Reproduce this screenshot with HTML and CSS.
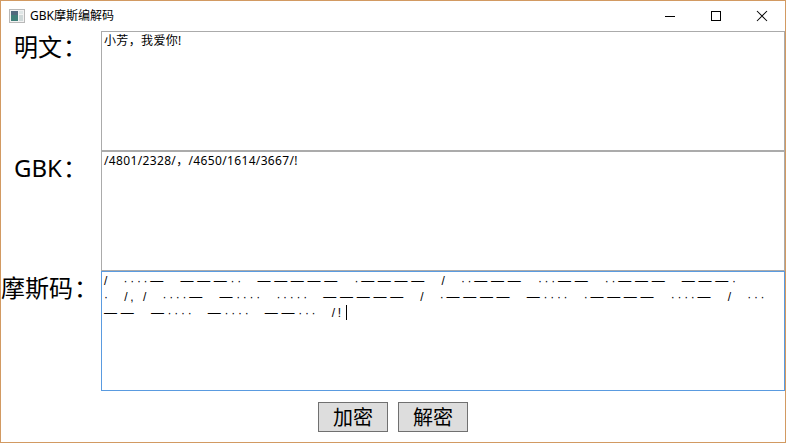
FILE: index.html
```html
<!DOCTYPE html>
<html lang="zh">
<head>
<meta charset="utf-8">
<title>GBK摩斯编解码</title>
<link rel="stylesheet" href="styles.css">
</head>
<body>
<div class="window">
  <header class="titlebar">
    <svg class="app-icon" width="16" height="14" viewBox="0 0 16 14">
      <rect x="0.5" y="0.5" width="15" height="13" fill="#f2f2f2" stroke="#b8b8b8"/>
      <rect x="2" y="2" width="7" height="10" fill="#3f7f78"/>
      <rect x="2" y="2" width="7" height="4" fill="#50687c"/>
      <rect x="10" y="2" width="4" height="3" fill="#dfe6e6"/>
      <rect x="10" y="6" width="4" height="6" fill="#cfd8d8"/>
    </svg>
    <span class="title">GBK摩斯编解码</span>
    <div class="controls">
      <svg class="ctrl" width="46" height="30" viewBox="0 0 46 30"><path d="M18 15.5h10" stroke="#000" fill="none"/></svg>
      <svg class="ctrl" width="46" height="30" viewBox="0 0 46 30"><rect x="18.5" y="10.5" width="9" height="9" stroke="#000" fill="none"/></svg>
      <svg class="ctrl" width="46" height="30" viewBox="0 0 46 30"><path d="M18 10l10 10M28 10l-10 10" stroke="#000" stroke-width="1.05" fill="none"/></svg>
    </div>
  </header>
  <main class="form">
    <label class="label">明文<span class="colon">：</span></label>
    <div class="box">小芳，我爱你!</div>
    <label class="label label-low">GBK<span class="colon">：</span></label>
    <div class="box">/4801/2328/，/4650/1614/3667/!</div>
    <label class="label label-wide">摩斯码<span class="colon">：</span></label>
    <div class="box box-focus">/  ····<b>—</b>  <b>———</b>··  <b>—————</b>  ·<b>————</b>  /  ··<b>———</b>  ···<b>——</b>  ··<b>———</b>  <b>———</b>·
·  /, /  ····<b>—</b>  <b>—</b>····  ·····  <b>—————</b>  /  ·<b>————</b>  <b>—</b>····  ·<b>————</b>  ····<b>—</b>  /  ···
<b>——</b>  <b>—</b>····  <b>—</b>····  <b>——</b>···  /!<span class="caret"></span></div>
  </main>
  <footer class="actions">
    <button class="btn">加密</button>
    <button class="btn">解密</button>
  </footer>
</div>
</body>
</html>
```

FILE: styles.css
```css
html, body {
  margin: 0;
  padding: 0;
  height: 100%;
  overflow: hidden;
}
body {
  font-family: "Noto Sans", "Noto Sans CJK SC", sans-serif;
  color: #000;
  background: #fff;
}
.window {
  box-sizing: border-box;
  width: 786px;
  height: 443px;
  border: 1px solid #d29a62;
  display: flex;
  flex-direction: column;
}
.titlebar {
  height: 30px;
  display: flex;
  align-items: center;
  padding-left: 8px;
  flex: none;
}
.app-icon {
  flex: none;
  margin-right: 5px;
}
.title {
  font-size: 12px;
  line-height: 30px;
}
.controls {
  margin-left: auto;
  display: flex;
  height: 30px;
}
.ctrl {
  display: block;
}
.form {
  display: grid;
  grid-template-columns: 100px 684px;
  grid-template-rows: 120px 120px 120px;
  flex: none;
}
.label {
  font-size: 24px;
  line-height: 32px;
  padding-left: 13px;
  white-space: nowrap;
}
.label-low {
  padding-top: 1px;
}
.label-wide {
  padding-left: 0;
  padding-top: 1px;
}
.colon {
  margin-left: 1px;
}
.box {
  box-sizing: border-box;
  border: 1px solid #ababab;
  padding: 1px 2px 0;
  font-size: 12px;
  line-height: 15px;
  letter-spacing: 0.35px;
  white-space: pre-wrap;
  overflow: hidden;
}
.box-focus {
  border-color: #5a9be0;
  font-family: "Liberation Sans", sans-serif;
  letter-spacing: 2.7px;
  word-spacing: 0.7px;
}
.box-focus b {
  font-weight: 400;
  font-size: 13px;
  letter-spacing: 3.7px;
}
.caret {
  display: inline-block;
  width: 1px;
  height: 15px;
  background: #000;
  margin-left: 2px;
  vertical-align: -3px;
}
.actions {
  display: flex;
  justify-content: center;
  gap: 10px;
  padding-top: 11px;
}
.btn {
  box-sizing: border-box;
  width: 70px;
  height: 30px;
  padding: 0;
  border: 1px solid #707070;
  background: #dddddd;
  font-family: "Noto Sans CJK SC", sans-serif;
  font-size: 20px;
  line-height: 28px;
  color: #000;
  border-radius: 0;
}
```
